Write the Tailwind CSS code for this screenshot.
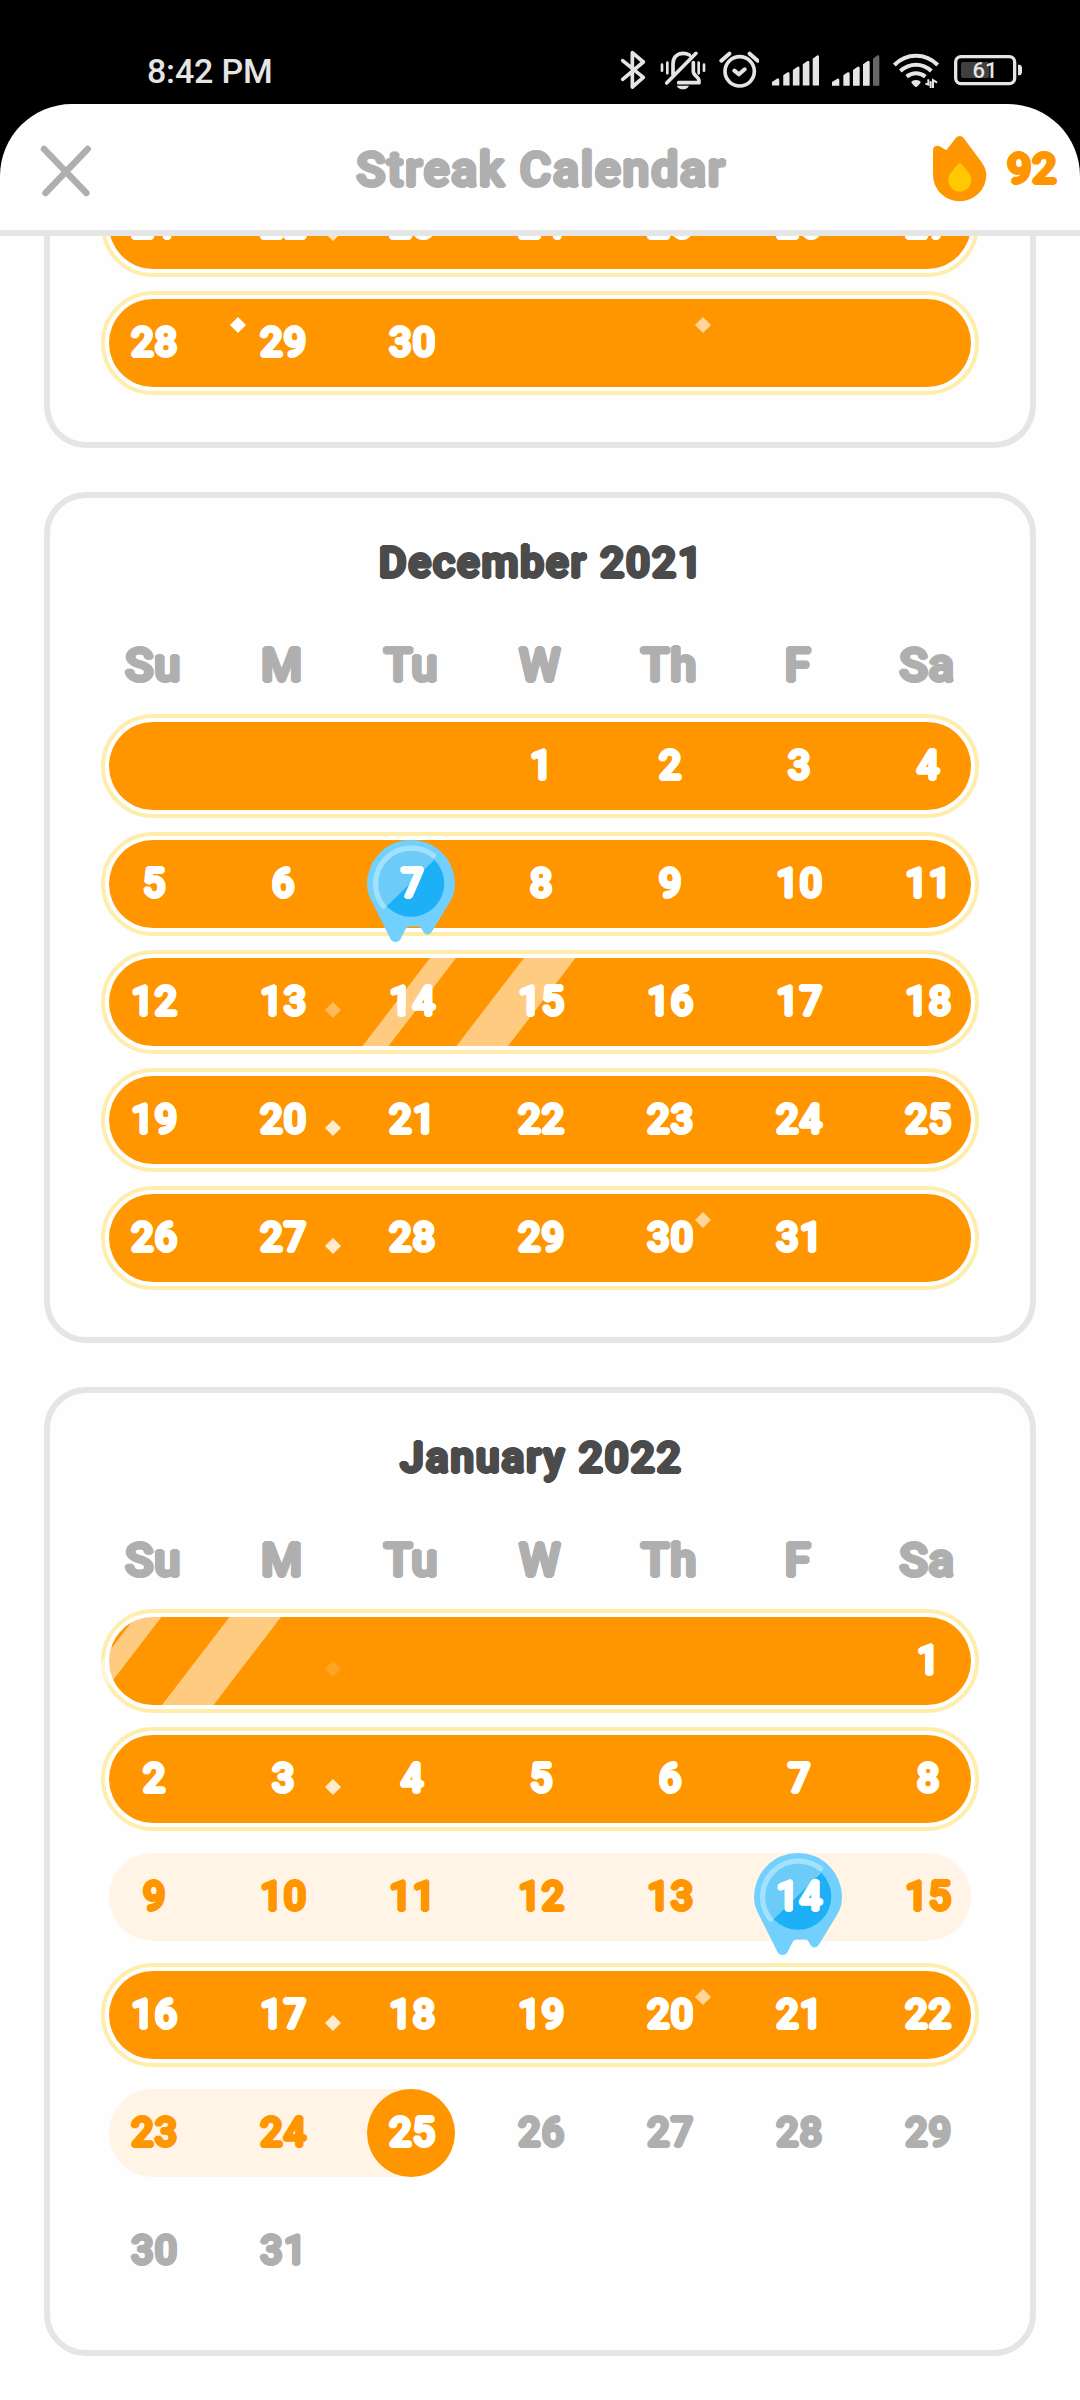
<!DOCTYPE html>
<html lang="en">
<head>
  <meta charset="UTF-8" />
  <meta name="viewport" content="width=device-width, initial-scale=1.0"/>
  <title>Streak Calendar</title>
  <script src="https://cdn.jsdelivr.net/npm/@tailwindcss/browser@4"></script>
</head>
<body class="bg-black w-[1080px] h-[2400px] overflow-hidden flex flex-col font-['Roboto','Open_Sans',sans-serif]">
  <!-- Status bar -->
  <div class="h-[104px] shrink-0 pt-[50px] pl-[147px] pr-[58px] flex items-start justify-between text-[#e5e5e5]">
    <span class="text-[34px] leading-[42px] tracking-[-0.2px] font-medium">8:42 PM</span>
    <div class="flex items-center gap-[13px]">
      <svg class="w-[27px] h-[40px]" viewBox="0 0 81 120" fill="none" stroke="currentColor" stroke-width="11" stroke-linecap="round" stroke-linejoin="round">
        <path d="M8 32L70 82L37 111V8L70 36L8 88"/>
      </svg>
      <svg class="w-[46px] h-[40px]" viewBox="0 0 138 120" fill="none" stroke="currentColor" stroke-width="11" stroke-linecap="round" stroke-linejoin="round">
        <path d="M6 44V62M22 38V70M116 38V70M132 44V62" stroke-width="8"/>
        <path d="M39 74V42C39 22 52 10 70 10C77 10 83 12 88 15M100 38V66C101 76 117 82 117 92V98H56M20 99L108 10"/>
        <path d="M50 107H87C83 115 77 118 69 118C61 118 54 115 50 107Z" fill="currentColor" stroke="none"/>
      </svg>
      <svg class="w-[40px] h-[40px]" viewBox="0 0 120 120" fill="none" stroke="currentColor" stroke-width="11" stroke-linecap="round" stroke-linejoin="round">
        <circle cx="62" cy="64" r="44"/>
        <path d="M7 32L31 11M116 32L92 11M46 62L60 73L77 58" stroke-width="12"/>
      </svg>
      <svg class="w-[47px] h-[40px]" viewBox="0 0 142 120" fill="currentColor">
        <path d="M0 107V96L16 86Q22 84 22 90V107ZM34 107V76L47 67Q53 65 53 71V107ZM63 107V60L77 50Q83 48 83 54V107ZM93 107V43L107 33Q113 31 113 37V107ZM123 107V26L136 16Q142 14 142 20V107Z"/>
      </svg>
      <svg class="w-[48px] h-[40px]" viewBox="0 0 144 120" fill="currentColor">
        <path d="M0 107V96L16 86Q22 84 22 90V107ZM34 107V76L47 67Q53 65 53 71V107ZM63 107V60L77 50Q83 48 83 54V107ZM93 107V43L107 33Q113 31 113 37V107Z"/>
        <path d="M123 107V26L136 16Q142 14 142 20V107Z" fill="#666"/>
      </svg>
      <svg class="w-[47px] h-[40px]" viewBox="0 0 141 120" fill="none" stroke="currentColor" stroke-width="12">
        <path d="M4 45Q31 17 69 17T134 45M22 63Q43 44 69 44T115 63M41 80Q54 70 69 70T97 80"/>
        <path d="M69 90C77 90 83 93 83 97C80 103 75 108 69 112C63 108 58 103 55 97C55 93 61 90 69 90Z" fill="currentColor" stroke="none"/>
        <path d="M97 101L106 104V88M113 114V94M120 114V90L132 98" stroke-width="6"/>
      </svg>
      <div class="relative w-[69px] h-[40px]">
        <svg class="w-[69px] h-[40px]" viewBox="0 0 207 120" fill="none">
          <rect x="8" y="20" width="177" height="81" rx="16" stroke="currentColor" stroke-width="10"/>
          <rect x="24" y="36" width="85" height="48" rx="6" fill="#404040"/>
          <path d="M195 44H199Q207 45 207 54V66Q207 75 199 76H195Z" fill="currentColor"/>
        </svg>
        <span class="absolute left-[19px] top-0 w-[26px] text-center text-[22px] leading-[42px] font-medium">61</span>
      </div>
    </div>
  </div>

  <div class="flex-1 min-h-0 bg-[#fefefe] rounded-t-[72px] flex flex-col">
    <!-- Header -->
    <header class="h-[132px] shrink-0 border-b-6 border-[#e5e5e5] pl-[40px] pr-[23px] flex items-center justify-between">
      <svg class="w-[52px] h-[52px] mt-[8px]" viewBox="0 0 52 52" fill="none" stroke="#afafaf" stroke-width="6.5" stroke-linecap="round">
        <path d="M4 4L46.400 48M47.700 4L5.500 48"/>
      </svg>
      <h1 class="ml-[58px] mt-[6px] text-[48px] tracking-[1.9px] font-medium text-[#afafaf] [text-shadow:2px_0,1.400px_1.400px,0_2px,-1.400px_1.400px,-2px_0,-1.400px_-1.400px,0_-2px,1.400px_-1.400px]">Streak Calendar</h1>
      <div class="flex items-center gap-[20px]">
        <svg class="w-[54px] h-[66px] mt-[4px]" viewBox="0 0 54 66">
          <path d="M0 14.500C0 10 4 8.500 8 11L13.300 14.200L22.500 2.500C25 -.7 28.500 -.7 31 2.500L47 24C51.500 30 53.300 34 53.300 39A26.650 26.300 0 0 1 0 39Z" fill="#ff9600"/>
          <path d="M24.500 28.500Q26.700 26 29 28.500L35.500 36.500C37.500 39 38.300 41 38.300 44A11.500 11.500 0 0 1 15.300 44C15.300 41 16 39 18 36.500Z" fill="#ffc800"/>
        </svg>
        <span class="mt-[3px] text-[43px] tracking-[0.5px] font-medium text-[#ff9600] [text-shadow:2px_0,1.400px_1.400px,0_2px,-1.400px_1.400px,-2px_0,-1.400px_-1.400px,0_-2px,1.400px_-1.400px]">92</span>
      </div>
    </header>

    <!-- Months -->
    <main id="months" class="flex-1 min-h-0 overflow-hidden px-[44px] flex flex-col gap-[44px]"></main>
  </div>

  <script>
    // kind: perfect | normal | current | future; lead = empty cells before the first day
    const months = [
      { rows: [
        { kind: "perfect", days: [21, 22, 23, 24, 25, 26, 27], sparkles: [[224, 52, 0.75]] },
        { kind: "perfect", days: [28, 29, 30], sparkles: [[129, 26, 1], [594, 26, 0.6]] },
      ] },
      { title: "December 2021", rows: [
        { kind: "perfect", lead: 3, days: [1, 2, 3, 4] },
        { kind: "perfect", days: [5, 6, 7, 8, 9, 10, 11], freeze: 7 },
        { kind: "perfect", days: [12, 13, 14, 15, 16, 17, 18], shine: 362.500, sparkles: [[224, 52, 0.35]] },
        { kind: "perfect", days: [19, 20, 21, 22, 23, 24, 25], sparkles: [[224, 52, 0.8]] },
        { kind: "perfect", days: [26, 27, 28, 29, 30, 31], sparkles: [[224, 52, 0.8], [594, 26, 0.6]] },
      ] },
      { title: "January 2022", rows: [
        { kind: "perfect", lead: 6, days: [1], shine: 68, sparkles: [[224, 52, 0.15]] },
        { kind: "perfect", days: [2, 3, 4, 5, 6, 7, 8], sparkles: [[224, 52, 0.8]] },
        { kind: "normal", days: [9, 10, 11, 12, 13, 14, 15], freeze: 14 },
        { kind: "perfect", days: [16, 17, 18, 19, 20, 21, 22], sparkles: [[224, 52, 0.8], [594, 26, 0.6]] },
        { kind: "current", days: [23, 24, 25, 26, 27, 28, 29] },
        { kind: "future", days: [30, 31] },
      ] },
    ];

    const freezePin = `
      <svg class="absolute left-0 top-0 w-[88px] h-[104px]" viewBox="0 0 88 104">
        <path d="M44 0A44 44 0 0 0 0 44C0 50 1.500 55 4 60L23.500 99Q25 102 28.500 102Q32 102 33.500 99L39 88.500Q40 86.500 42 86.500H52Q53.500 86.500 54.500 88.500L56.500 92Q58 94.500 60.500 94.500Q63 94.500 65 91.500L83.500 61C86.500 56 88 50 88 44A44 44 0 0 0 44 0Z" fill="#72d0ff"/>
        <circle cx="44" cy="43.500" r="33.300" fill="#1cb0f6"/>
        <path d="M19.700 66.300A33.300 33.300 0 0 1 67.400 19.800Z" fill="#6dcbf8"/>
        <path d="M16.500 66.300A35.800 35.800 0 0 1 66.500 15.700" fill="none" stroke="#a2e2ff" stroke-width="5.300" stroke-linecap="round"/>
      </svg>`;

    // two slanted light bands; x is the bottom left corner of the first one
    function shine(x) {
      const s = x - 101;
      return `
        <div class="absolute -left-[8px] top-0 w-[878px] h-[88px] rounded-full overflow-hidden">
          <svg class="w-[878px] h-[88px]" viewBox="0 0 878 88" fill="#fff" fill-opacity="0.5">
            <path d="M${s} 88L${s + 67.500} 0h26L${s + 26} 88ZM${s + 94} 88L${s + 161.500} 0h51.500L${s + 145.500} 88Z"/>
          </svg>
        </div>`;
    }

    function sparkle([x, y, alpha]) {
      return `<svg class="absolute w-[16px] h-[16px]" style="left:${x - 8}px;top:${y - 8}px;opacity:${alpha}" viewBox="0 0 16 16"><path d="M8 0L16 8L8 16L0 8Z" fill="#fff"/></svg>`;
    }

    function cell(day, row) {
      let color = "text-white";
      if (row.kind === "normal" && day !== row.freeze) color = "text-[#ff9600]";
      if (row.kind === "current") color = day < 25 ? "text-[#ff9600]" : day === 25 ? "text-white bg-[#ff9600] rounded-full" : "text-[#afafaf]";
      if (row.kind === "future") color = "text-[#afafaf]";
      return `
        <div class="relative size-[88px] pl-[3px] flex items-center justify-center ${color}">
          ${day === row.freeze ? freezePin : ""}
          <span class="relative">${day}</span>
        </div>`;
    }

    function week(row) {
      const fill = {
        perfect: "bg-[#ff9600] outline-4 outline-offset-4 outline-[#ffedab]",
        normal: "bg-[#fff4e5]",
        current: "",
        future: "",
      }[row.kind];
      const blanks = "<div class='size-[88px]'></div>";
      const lead = row.lead || 0;
      return `
        <div class="relative h-[88px] rounded-full flex justify-between ${fill}">
          ${row.kind === "current" ? '<div class="absolute left-0 top-0 w-[346px] h-[88px] rounded-full bg-[#fff4e5]"></div>' : ""}
          ${row.shine ? shine(row.shine) : ""}
          ${blanks.repeat(lead)}
          ${row.days.map(d => cell(d, row)).join("")}
          ${blanks.repeat(7 - lead - row.days.length)}
          ${(row.sparkles || []).map(sparkle).join("")}
        </div>`;
    }

    function month(m) {
      const weekdays = ["Su", "M", "Tu", "W", "Th", "F", "Sa"];
      // the ring of shadows thickens the strokes and rounds their ends
      const heading = !m.title ? "" : `
        <h2 class="mt-[33px] pl-[3px] h-[64px] leading-[64px] text-center text-[42px] tracking-[2.1px] font-medium text-[#4b4b4b] [text-shadow:2px_0,1.400px_1.400px,0_2px,-1.400px_1.400px,-2px_0,-1.400px_-1.400px,0_-2px,1.400px_-1.400px]">${m.title}</h2>
        <div class="mt-[38px] mb-[25px] h-[64px] leading-[64px] flex justify-between text-[47px] tracking-[0.8px] font-medium text-[#afafaf] [text-shadow:2px_0,1.400px_1.400px,0_2px,-1.400px_1.400px,-2px_0,-1.400px_-1.400px,0_-2px,1.400px_-1.400px]">
          ${weekdays.map(d => `<div class="w-[88px] text-center">${d}</div>`).join("")}
        </div>`;
      const frame = m.title ? "rounded-[42px] border-6" : "rounded-b-[42px] border-6 border-t-0";
      return `
        <section class="shrink-0 px-[59px] pb-[55px] border-[#e5e5e5] ${frame}">
          ${heading}
          <div class="flex flex-col gap-[30px] text-[40px] tracking-[0.8px] font-medium [text-shadow:1.800px_0,1.300px_1.300px,0_1.800px,-1.300px_1.300px,-1.800px_0,-1.300px_-1.300px,0_-1.800px,1.300px_-1.300px] ${m.title ? "" : "-mt-[55px]"}">
            ${m.rows.map(week).join("")}
          </div>
        </section>`;
    }

    document.getElementById("months").innerHTML = months.map(month).join("");
  </script>
</body>
</html>
